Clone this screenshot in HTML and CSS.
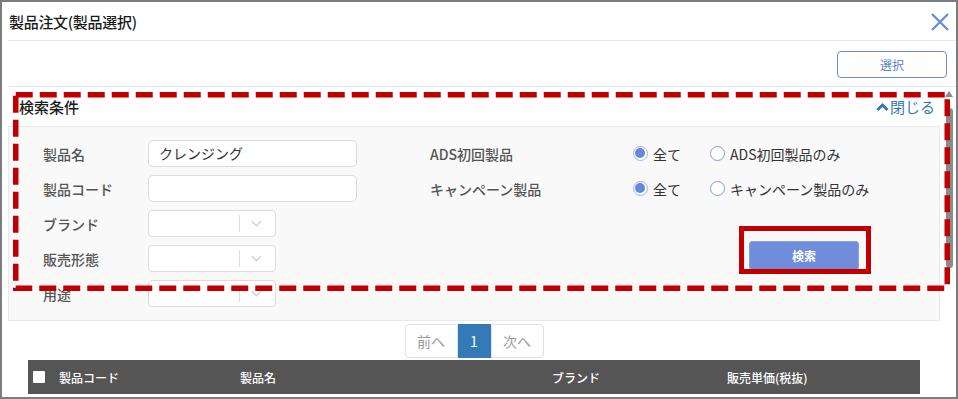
FILE: index.html
```html
<!DOCTYPE html>
<html lang="ja">
<head>
  <meta charset="UTF-8" />
  <title>製品注文(製品選択)</title>
  <link rel="stylesheet" href="styles.css">
</head>
<body>
  <div class="dialog">
    <div class="dlg-head">
      <span class="dlg-title">製品注文(製品選択)</span>
      <svg class="dlg-close" width="20" height="20" viewBox="0 0 20 20">
        <path d="M2 2 L18 18 M18 2 L2 18" stroke="#6a8fd8" stroke-width="2.4" fill="none" />
      </svg>
    </div>

    <div class="toolbar">
      <button class="btn-outline">選択</button>
    </div>

    <div class="panel">
      <div class="panel-head">
        <span class="panel-title">検索条件</span>
        <a class="panel-toggle">
          <svg width="13" height="10" viewBox="0 0 13 10">
            <path d="M1.5 8 L6.5 3 L11.5 8" stroke="#337ab7" stroke-width="3" fill="none" />
          </svg>閉じる</a>
      </div>
      <div class="panel-body">
        <div class="col-left">
          <div class="row">
            <label>製品名</label>
            <div class="input">クレンジング</div>
          </div>
          <div class="row">
            <label>製品コード</label>
            <div class="input"></div>
          </div>
          <div class="row">
            <label>ブランド</label>
            <div class="select"><span class="sel-arrow"></span></div>
          </div>
          <div class="row">
            <label>販売形態</label>
            <div class="select"><span class="sel-arrow"></span></div>
          </div>
          <div class="row">
            <label>用途</label>
            <div class="select"><span class="sel-arrow"></span></div>
          </div>
        </div>
        <div class="col-right">
          <div class="row">
            <label class="wide">ADS初回製品</label>
            <span class="radio checked"></span><span class="radio-text">全て</span>
            <span class="radio"></span><span class="radio-text">ADS初回製品のみ</span>
          </div>
          <div class="row">
            <label class="wide">キャンペーン製品</label>
            <span class="radio checked"></span><span class="radio-text">全て</span>
            <span class="radio"></span><span class="radio-text">キャンペーン製品のみ</span>
          </div>
          <div class="search-row">
            <button class="btn-search">検索</button>
          </div>
        </div>
      </div>
    </div>

    <div class="pager">
      <span class="page disabled">前へ</span>
      <span class="page active">1</span>
      <span class="page disabled">次へ</span>
    </div>

    <div class="table-head">
      <span class="chk"></span>
      <span>製品コード</span>
      <span>製品名</span>
      <span>ブランド</span>
      <span>販売単価(税抜)</span>
    </div>

    <!-- スクロールバーと赤枠の注記 -->
    <div class="scrollbar">
      <span class="sb-up"></span>
      <span class="sb-thumb"></span>
    </div>
    <svg class="mark-dash" width="958" height="399">
      <rect x="15.75" y="94.75" width="931.5" height="193.5" fill="none" stroke="#c00000" stroke-width="5.5" stroke-dasharray="17 7" />
    </svg>
    <div class="mark-box"></div>
  </div>
</body>
</html>
```

FILE: styles.css
```css
/* 全体 */
body {
  margin: 0;
  font-family: 'Noto Sans CJK JP', 'Noto Sans', sans-serif;
  color: #333;
}
.dialog {
  width: 958px;
  height: 399px;
  box-sizing: border-box;
  border: 2px solid #7d7d7d;
  background: #fff;
  position: relative;
  overflow: hidden;
}

/* ヘッダー */
.dlg-head {
  height: 38px;
  margin-left: 6px;
  padding: 0 6px 0 1px;
  border-bottom: 1px solid #e6e6e6;
  display: flex;
  align-items: center;
  justify-content: space-between;
}
.dlg-title {
  font-size: 15px;
  font-weight: 500;
  color: #1a1a1a;
  letter-spacing: -0.3px;
}
.dlg-close {
  margin-top: 2px;
}
.toolbar {
  height: 45px;
  margin-left: 6px;
  padding-right: 9px;
  border-bottom: 1px solid #e6e6e6;
  display: flex;
  align-items: center;
  justify-content: flex-end;
}
.btn-outline {
  width: 110px;
  height: 27px;
  margin-top: 1px;
  background: #fff;
  border: 1px solid #6b8bd6;
  border-radius: 4px;
  color: #5b7fd0;
  font-family: inherit;
  font-size: 12px;
}

/* 検索パネル */
.panel {
  margin: 0 16px 0 6px;
}
.panel-head {
  height: 39px;
  padding: 0 5px 0 11px;
  display: flex;
  align-items: center;
  justify-content: space-between;
}
.panel-title {
  font-size: 15px;
  font-weight: 500;
  color: #1a1a1a;
}
.panel-toggle {
  color: #337ab7;
  font-size: 15px;
  display: flex;
  align-items: center;
  gap: 1px;
}
.panel-body {
  background: #f9f9f9;
  border: 1px solid #e8e8e8;
  padding: 13px 0 13px 34px;
  display: grid;
  grid-template-columns: 387px 1fr;
}
.col-left, .col-right {
  display: flex;
  flex-direction: column;
  gap: 8px;
}
.row {
  height: 27px;
  display: flex;
  align-items: center;
}
.row label {
  width: 105px;
  font-size: 14px;
  font-weight: 500;
  color: #555;
}
.row label.wide {
  width: 203px;
}
.input {
  width: 209px;
  height: 27px;
  box-sizing: border-box;
  background: #fff;
  border: 1px solid #dcdcdc;
  border-radius: 5px;
  padding-left: 10px;
  font-size: 14px;
  line-height: 25px;
  color: #333;
}
.select {
  width: 128px;
  height: 27px;
  box-sizing: border-box;
  background: #fff;
  border: 1px solid #dcdcdc;
  border-radius: 4px;
  display: flex;
  justify-content: flex-end;
  align-items: center;
}
.sel-arrow {
  width: 35px;
  height: 17px;
  border-left: 1px solid #ddd;
  position: relative;
}
.sel-arrow::after {
  content: '';
  position: absolute;
  left: 13px;
  top: 3px;
  width: 6px;
  height: 6px;
  border-right: 1.5px solid #c4c4c4;
  border-bottom: 1.5px solid #c4c4c4;
  transform: rotate(45deg);
}
.radio {
  width: 15px;
  height: 15px;
  box-sizing: border-box;
  border: 1px solid #7f9de2;
  border-radius: 50%;
  background: #fff;
  position: relative;
}
.radio.checked {
  border: 1.5px solid #9db3ea;
}
.radio.checked::after {
  content: '';
  position: absolute;
  left: 1px;
  top: 1px;
  width: 10px;
  height: 10px;
  border-radius: 50%;
  background: #6688dc;
}
.radio-text {
  font-size: 14px;
  color: #333;
  margin: 0 29px 0 5px;
}
.search-row {
  margin-top: 31px;
  padding-left: 319px;
}
.btn-search {
  width: 110px;
  height: 29px;
  background: #6f8ddb;
  border: 1px solid #8aa3e2;
  border-radius: 3px;
  color: #fff;
  font-family: inherit;
  font-size: 12px;
  font-weight: 700;
}

/* ページャー */
.pager {
  margin: 3px 16px 0 6px;
  display: flex;
  justify-content: center;
}
.page {
  height: 34px;
  box-sizing: border-box;
  border: 1px solid #e2e2e2;
  font-size: 14px;
  line-height: 32px;
  text-align: center;
}
.page.disabled {
  width: 53px;
  color: #999;
  background: #fff;
}
.page:first-child {
  border-radius: 4px 0 0 4px;
}
.page:last-child {
  border-radius: 0 4px 4px 0;
}
.page.active {
  width: 33px;
  background: #337ab7;
  border-color: #337ab7;
  color: #fff;
}

/* テーブル見出し */
.table-head {
  margin: 2px 0 0 26px;
  width: 892px;
  height: 34px;
  background: #555;
  color: #fff;
  font-size: 12px;
  font-weight: 500;
  display: grid;
  grid-template-columns: 31px 181px 312px 175px 1fr;
  align-items: center;
}
.chk {
  width: 12px;
  height: 12px;
  margin-left: 5px;
  background: #fff;
  border-radius: 1px;
}

/* スクロールバー */
.scrollbar {
  position: absolute;
  left: 943px;
  top: 89px;
  width: 8px;
}
.sb-up {
  display: block;
  margin: 0 auto;
  width: 0;
  height: 0;
  border-left: 4px solid transparent;
  border-right: 4px solid transparent;
  border-bottom: 6px solid #8a8a8a;
}
.sb-thumb {
  display: block;
  margin: 11px 0 0 1px;
  width: 7px;
  height: 160px;
  border-radius: 4px;
  background: #8a8a8a;
}

/* 赤枠 */
.mark-dash {
  position: absolute;
  left: -2px;
  top: -2px;
}
.mark-box {
  position: absolute;
  left: 737px;
  top: 224px;
  width: 132px;
  height: 48px;
  box-sizing: border-box;
  border: 5px solid #c00000;
}
```
